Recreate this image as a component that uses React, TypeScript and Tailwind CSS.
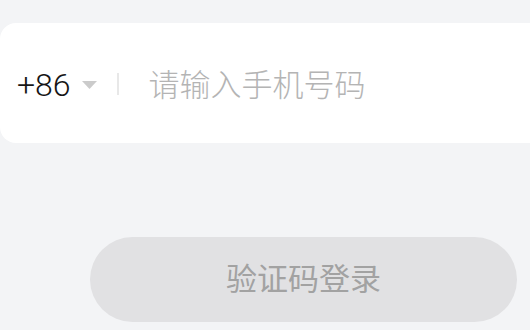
export default function App() {
  return (
    <div
      className="h-[330px] w-[530px] overflow-hidden bg-[#f3f4f6]"
      style={{ fontFamily: 'Roboto, "Noto Sans CJK SC", sans-serif' }}
    >
      {/* Phone input card */}
      <div className="mt-[23px] flex h-[120px] w-[580px] items-center rounded-[16px] bg-white pl-[17px]">
        <span className="mt-[3px] text-[32px] font-light leading-none text-[#161616]">+86</span>
        <svg className="ml-[11px] mt-[3px]" width="15" height="8" viewBox="0 0 15 8">
          <path d="M0 0 H15 L7.5 8 Z" fill="#cbcbcb" />
        </svg>
        <div className="ml-[20px] mt-[2px] h-[22px] w-[2px] bg-[#e8e8e8]" />
        <span className="ml-[30px] mt-[4px] text-[31px] font-light leading-none text-[#b4b4b4]">
          请输入手机号码
        </span>
      </div>

      {/* Submit */}
      <div className="ml-[90px] mt-[94px] flex h-[85px] w-[427px] items-center justify-center rounded-full bg-[#e1e1e3]">
        <span className="text-[31px] leading-none text-[#a2a2a2]">验证码登录</span>
      </div>
    </div>
  );
}
